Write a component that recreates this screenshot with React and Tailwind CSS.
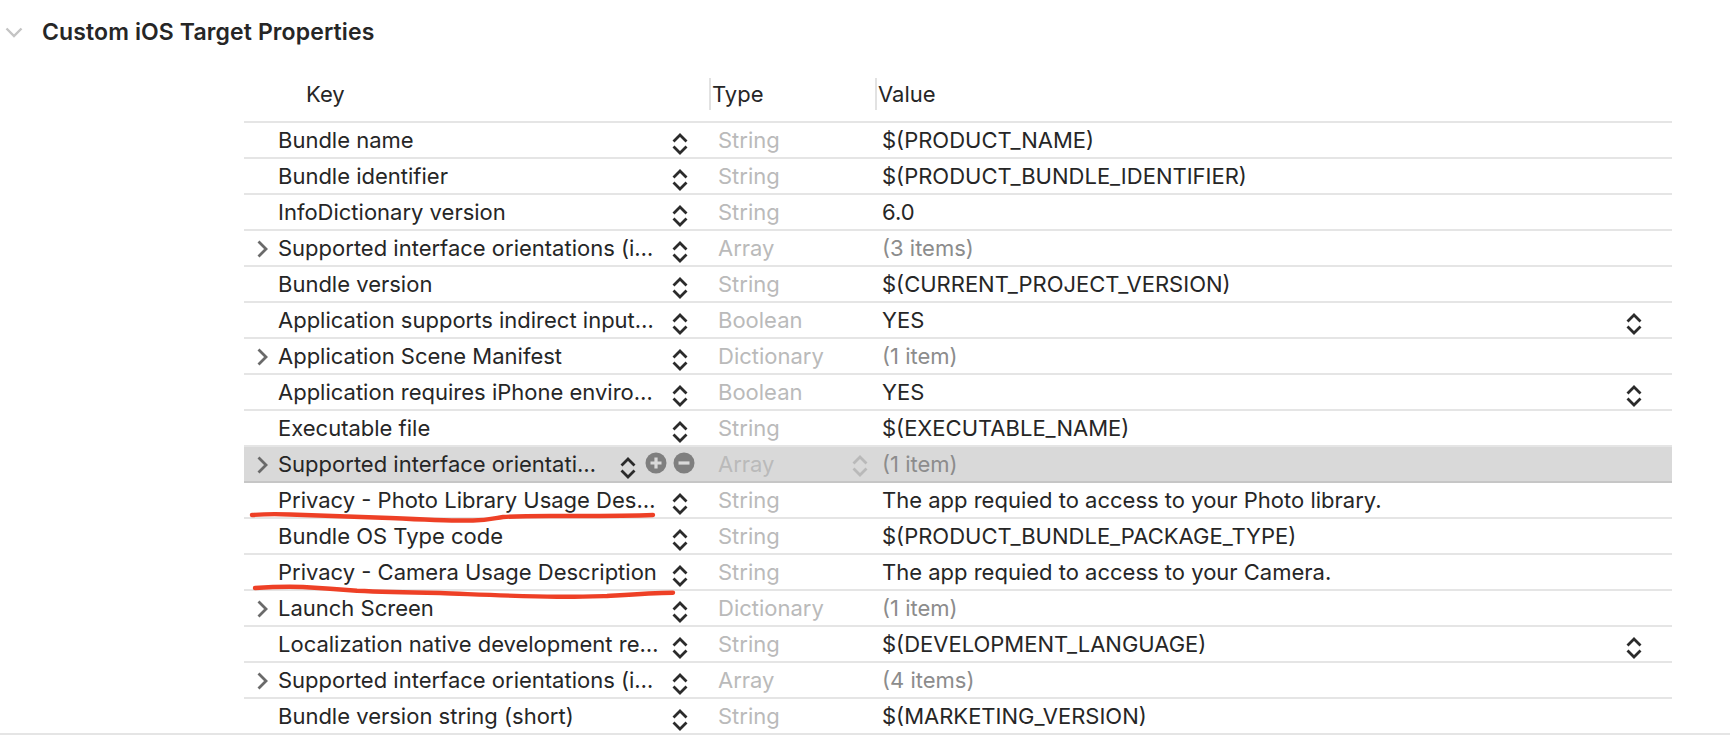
const rows = [
  { key: 'Bundle name', type: 'String', value: '$(PRODUCT_NAME)' },
  { key: 'Bundle identifier', type: 'String', value: '$(PRODUCT_BUNDLE_IDENTIFIER)' },
  { key: 'InfoDictionary version', type: 'String', value: '6.0' },
  { key: 'Supported interface orientations (i…', type: 'Array', value: '(3 items)', open: true, muted: true },
  { key: 'Bundle version', type: 'String', value: '$(CURRENT_PROJECT_VERSION)' },
  { key: 'Application supports indirect input…', type: 'Boolean', value: 'YES', picker: true },
  { key: 'Application Scene Manifest', type: 'Dictionary', value: '(1 item)', open: true, muted: true },
  { key: 'Application requires iPhone enviro…', type: 'Boolean', value: 'YES', picker: true },
  { key: 'Executable file', type: 'String', value: '$(EXECUTABLE_NAME)' },
  { key: 'Supported interface orientati…', type: 'Array', value: '(1 item)', open: true, muted: true, selected: true },
  { key: 'Privacy - Photo Library Usage Des…', type: 'String', value: 'The app requied to access to your Photo library.' },
  { key: 'Bundle OS Type code', type: 'String', value: '$(PRODUCT_BUNDLE_PACKAGE_TYPE)' },
  { key: 'Privacy - Camera Usage Description', type: 'String', value: 'The app requied to access to your Camera.' },
  { key: 'Launch Screen', type: 'Dictionary', value: '(1 item)', open: true, muted: true },
  { key: 'Localization native development re…', type: 'String', value: '$(DEVELOPMENT_LANGUAGE)', picker: true },
  { key: 'Supported interface orientations (i…', type: 'Array', value: '(4 items)', open: true, muted: true },
  { key: 'Bundle version string (short)', type: 'String', value: '$(MARKETING_VERSION)', last: true },
];

function Stepper({ className }) {
  return (
    <svg width="16" height="24" viewBox="0 0 16 24" fill="none" stroke="currentColor" strokeWidth="2.8" className={className}>
      <path d="M1.5 9.5 8 3l6.5 6.5" />
      <path d="M1.5 14.5 8 21l6.5-6.5" />
    </svg>
  );
}

function RoundButton({ minus }) {
  return (
    <svg width="22" height="22" viewBox="0 0 22 22" className="-translate-y-[1px]">
      <circle cx="11" cy="11" r="10.5" fill="#7f7f7f" />
      <path d={minus ? 'M5.5 11h11' : 'M5.5 11h11M11 5.5v11'} stroke="#d9d9d9" strokeWidth="3.2" />
    </svg>
  );
}

function Row({ row }) {
  const border = row.last ? 'h-[34px]' : row.selected ? 'h-9 border-b-2 border-[#c6c6c6]' : 'h-9 border-b-2 border-[#e5e5e5]';
  return (
    <div className={`flex items-center ${border} ${row.selected ? 'bg-[#d9d9d9]' : ''}`}>
      <div className="w-[34px] pl-[13px] shrink-0">
        {row.open && (
          <svg width="11" height="18" viewBox="0 0 11 18" fill="none" stroke="#6a6a6a" strokeWidth="2.8" className="block mt-[2px]">
            <path d="M1.5 1.5 9 9l-7.500 7.500" />
          </svg>
        )}
      </div>
      <div className={`flex items-center w-[440px] shrink-0 ${row.selected ? 'pr-[23px]' : 'pr-[30px]'}`}>
        <span className="flex-1 whitespace-nowrap overflow-hidden">{row.key}</span>
        <Stepper className="text-[#2b2b2b] mt-2 shrink-0" />
        {row.selected && (
          <div className="flex gap-[6px] ml-[9px] shrink-0">
            <RoundButton />
            <RoundButton minus />
          </div>
        )}
      </div>
      <div className="flex items-center justify-between w-[164px] shrink-0 text-[#bababa]">
        <span>{row.type}</span>
        {row.selected && <Stepper className="text-[#b9b9b9] mr-[14px] mt-1" />}
      </div>
      <div className={`flex flex-1 items-center justify-between pr-[30px] ${row.muted ? 'text-[#8c8c8c]' : ''}`}>
        <span>{row.value}</span>
        {row.picker && <Stepper className="text-[#2b2b2b] mt-2" />}
      </div>
    </div>
  );
}

export default function App() {
  return (
    <div className="relative h-[740px] bg-white text-[#262626] text-[22px] leading-[28px] font-['Inter',sans-serif] overflow-hidden">
      {/* Section title */}
      <div className="flex items-center h-16">
        <svg width="18" height="11" viewBox="0 0 18 11" fill="none" stroke="#c4c4c4" strokeWidth="2.4" className="ml-[5px]">
          <path d="M1.5 1.5 9 9l7.500-7.500" />
        </svg>
        <h2 className="ml-[19px] text-[23px] font-semibold tracking-[0.12px]">Custom iOS Target Properties</h2>
      </div>

      <div className="pl-[244px] pr-[58px] border-b-2 border-[#e5e5e5]">
        {/* Column headers */}
        <div className="flex items-center h-[59px] border-b-2 border-[#e5e5e5] pt-[2px]">
          <span className="w-[465px] pl-[62px] shrink-0">Key</span>
          <span className="w-[166px] shrink-0 border-l-2 border-[#e2e2e2] pl-[1px] h-8 leading-8">Type</span>
          <span className="border-l-2 border-[#e2e2e2] pl-[1px] h-8 leading-8">Value</span>
        </div>

        {rows.map((row, i) => (
          <Row key={i} row={row} />
        ))}
      </div>

      {/* Hand drawn red underlines */}
      <svg className="absolute inset-0 pointer-events-none" width="1730" height="740" fill="none" stroke="#ee4026" strokeWidth="4.400" strokeLinecap="round">
        <path d="M252 515C265 514 278 514 290 514.500C320 515.500 355 517 390 518C420 519.500 450 521 473 520.500C488 520 495 518 503 517C525 515.500 550 516 573 516C600 516 630 516 653 515" />
        <path d="M255 588C270 587 288 586.500 303 587C320 588 340 589.500 357 590.700C385 592 412 592.500 440 593C480 594.500 520 596.500 557 596.700C575 597 590 596.500 607 596C630 594.500 650 593 673 592.700" />
      </svg>
    </div>
  );
}
